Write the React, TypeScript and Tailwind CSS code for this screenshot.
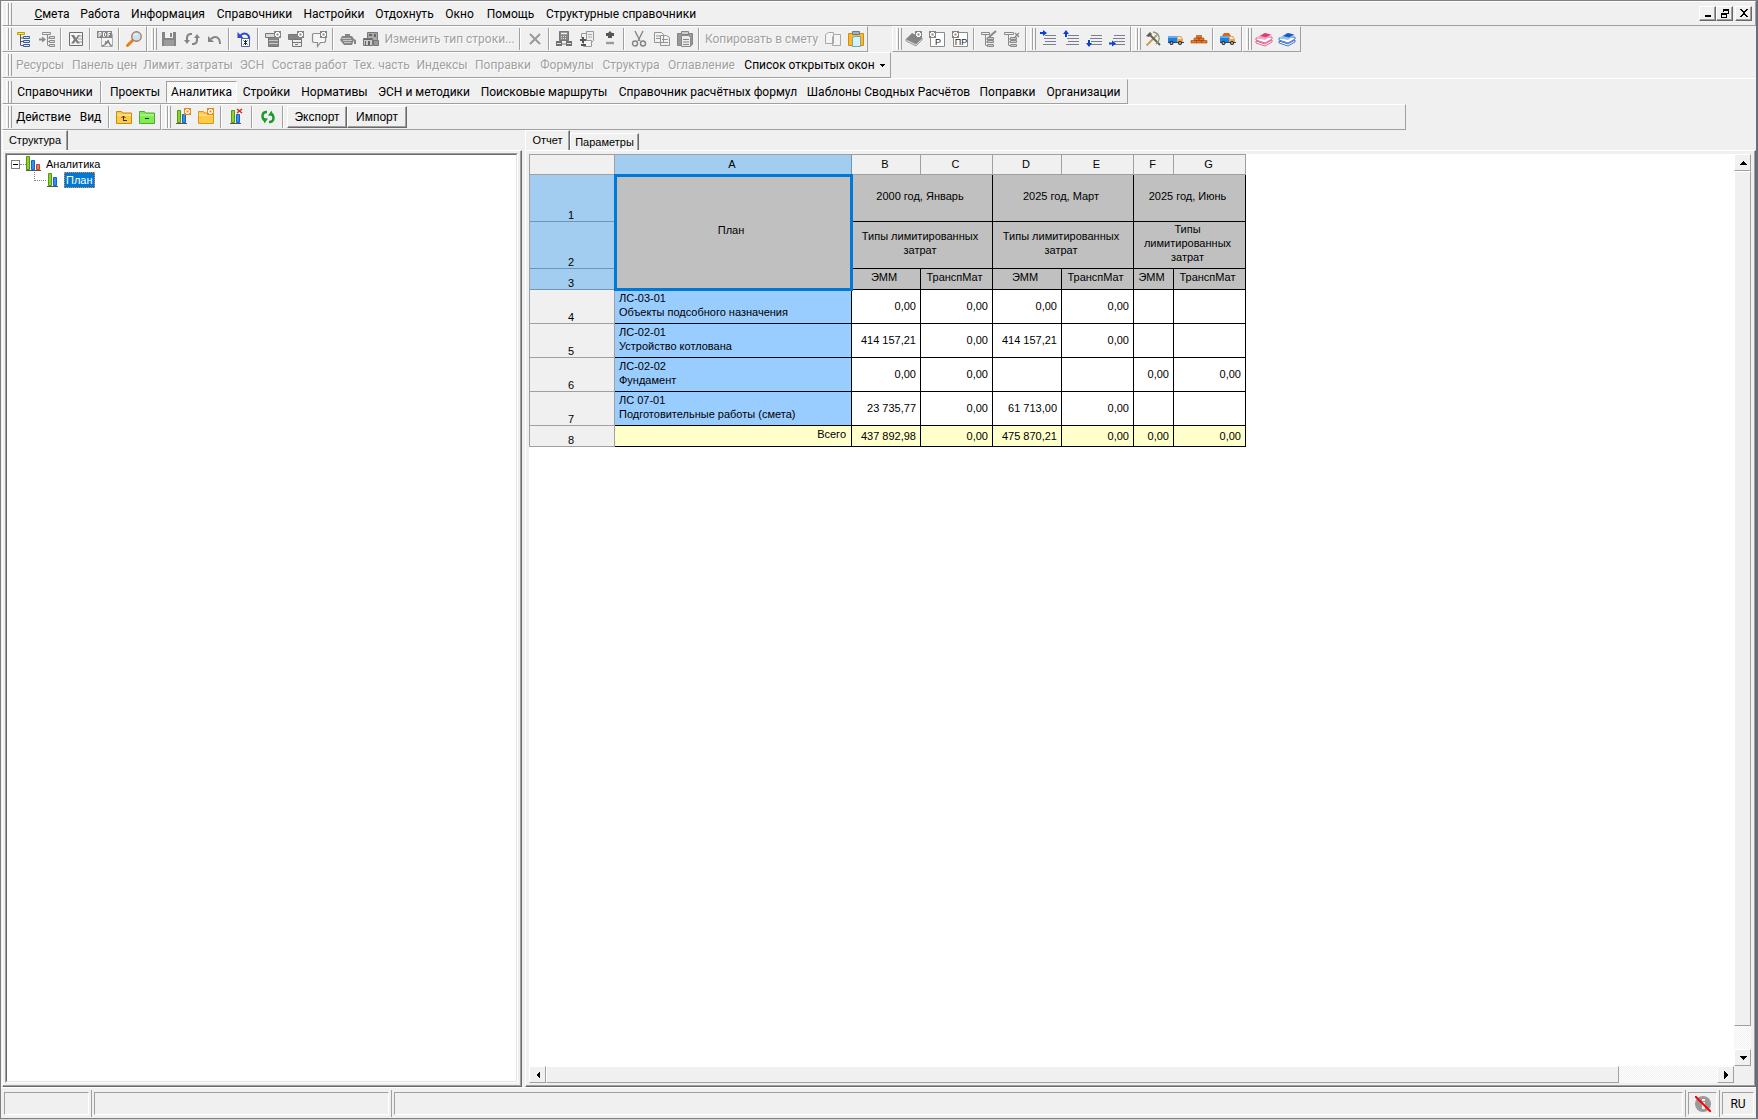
import type { ReactNode } from "react";

const ui = "font-[Roboto,'Open_Sans',sans-serif] text-[12px]";

type Item = { label: string; w: string; disabled?: boolean };

const menu: Item[] = [
  { label: "Смета", w: "w-[46px]" },
  { label: "Работа", w: "w-[50px]" },
  { label: "Информация", w: "w-[86px]" },
  { label: "Справочники", w: "w-[87px]" },
  { label: "Настройки", w: "w-[72px]" },
  { label: "Отдохнуть", w: "w-[69px]" },
  { label: "Окно", w: "w-[41px]" },
  { label: "Помощь", w: "w-[61px]" },
  { label: "Структурные справочники", w: "w-[160px]" },
];

const windows: Item[] = [
  { label: "Ресурсы", w: "w-[56px]" },
  { label: "Панель цен", w: "w-[73px]" },
  { label: "Лимит. затраты", w: "w-[94px]" },
  { label: "ЭСН", w: "w-[34px]" },
  { label: "Состав работ", w: "w-[81px]" },
  { label: "Тех. часть", w: "w-[63px]" },
  { label: "Индексы", w: "w-[58px]" },
  { label: "Поправки", w: "w-[64px]" },
  { label: "Формулы", w: "w-[64px]" },
  { label: "Структура", w: "w-[64px]" },
  { label: "Оглавление", w: "w-[77px]" },
];

const sections: Item[] = [
  { label: "Проекты", w: "w-[62px]" },
  { label: "Аналитика", w: "w-[71px]" },
  { label: "Стройки", w: "w-[59px]" },
  { label: "Нормативы", w: "w-[77px]" },
  { label: "ЭСН и методики", w: "w-[102px]" },
  { label: "Поисковые маршруты", w: "w-[138px]" },
  { label: "Справочник расчётных формул", w: "w-[190px]" },
  { label: "Шаблоны Сводных Расчётов", w: "w-[171px]" },
  { label: "Поправки", w: "w-[67px]" },
  { label: "Организации", w: "w-[85px]" },
];

function Bar({ children, className = "" }: { children: ReactNode; className?: string }) {
  return (
    <div className={`flex h-[26px] items-center border-t border-r border-b border-l border-t-white border-r-[#a0a0a0] border-b-[#a0a0a0] border-l-white pl-[3px] ${className}`}>
      <div className="flex h-[22px] w-[6px] shrink-0">
        <i className="w-[3px] border-r border-l border-r-[#a0a0a0] border-l-white" />
        <i className="w-[3px] border-r border-l border-r-[#a0a0a0] border-l-white" />
      </div>
      {children}
    </div>
  );
}

function Sep({ wide }: { wide?: boolean }) {
  return <i className={`h-[22px] w-[2px] shrink-0 border-r border-l border-r-white border-l-[#a0a0a0] ${wide ? "mx-[3px]" : "mx-[2px]"}`} />;
}

function TextButton({ label, w, disabled, children }: Item & { children?: ReactNode }) {
  return (
    <button type="button" disabled={disabled} className={`flex h-[22px] shrink-0 items-center justify-center whitespace-nowrap ${w} ${disabled ? "text-[#a0a0a0] [text-shadow:1px_1px_0_#fff]" : "text-black"}`}>
      {children ?? label}
    </button>
  );
}

const gear = (x: number, y: number, c: string) => (
  <g>
    <rect x={x} y={y} width="7" height="7" fill={c} />
    <path d={`M${x + 1} ${y + 2}h1v-1h3v1h1v3h-1v1h-3v-1h-1z`} fill="#fff" />
    <rect x={x + 2.5} y={y + 2.5} width="2" height="2" fill={c} />
  </g>
);

const lines = (x: number, w: number) => (
  <path d={`M${x} 4.5h${w}M${x - 1} 7.5h${w + 1}M${x} 10.5h${w}M${x - 2} 13.5h${w + 2}`} stroke="#7b7b95" fill="none" />
);

const truck = (
  <g>
    <path d="M0 5h9v6H0z" fill="#1f7fdc" />
    <path d="M0 5h9v2H0z" fill="#5fb0f2" />
    <path d="M9 5h4l2 3v3H9z" fill="#f0a24a" />
    <path d="M10 6h2l2 2h-4z" fill="#dff0fb" />
    <path d="M0 11h16v1H0z" fill="#174a86" />
    <circle cx="3.5" cy="12" r="2" fill="#222" />
    <circle cx="12" cy="12" r="2" fill="#222" />
    <circle cx="3.5" cy="12" r="1" fill="#bbb" />
    <circle cx="12" cy="12" r="1" fill="#bbb" />
  </g>
);

const books = (dark: string, light: string) => (
  <g>
    <path d="M0 10v2l9 3 7-4V9l-7 4z" fill="#fff" stroke={dark} strokeWidth=".8" />
    <path d="M0 7v2l9 3 7-4V6z" fill="#fff" stroke={dark} strokeWidth=".8" />
    <path d="M0 7l8-5 8 2-7 5z" fill={light} />
    <path d="M4 5l5-3 6 1.500-5 3z" fill={dark} />
  </g>
);

const folder = (a: string, b: string) => (
  <g>
    <path d="M.5 4.500V2.500h5l1 1.500h9v10.500H.5z" fill={a} stroke={b} />
    <path d="M1 6h14" stroke="#fff" opacity=".6" />
  </g>
);

const bars = (
  <g>
    <path d="M2.500 1.500h3v12h-3z" fill="#8fd12a" stroke="#4f9a10" />
    <path d="M7.500 5.500h3v8h-3z" fill="#2a94f4" stroke="#1663c8" />
    <path d="M1 14.500h11" stroke="#555" />
  </g>
);

const icons: Record<string, ReactNode> = {
  tree: (
    <g>
      <path d="M1.500 1.500h7v2h-7z" fill="#ffef3a" stroke="#b5a000" />
      <path d="M4.500 4v10.500M5 7h3M5 10.500h3M5 14.500h3" stroke="#556" fill="none" />
      <path d="M7.500 5.500h6v2h-6zM7.500 9.500h6v2h-6zM7.500 13.500h6v2h-6z" fill="#cfe2ff" stroke="#3d5f96" />
    </g>
  ),
  treeIn: (
    <g stroke="#8c8c8c" fill="none">
      <path d="M3.500 1.500h8v2h-8zM8.500 4v10.500M9 7h2M9 10.500h2M9 14.500h2" />
      <path d="M10.500 5.500h5v2h-5zM10.500 9.500h5v2h-5zM10.500 13.500h5v2h-5z" fill="#ddd" />
      <path d="M0 8.500h4" strokeWidth="2" />
      <path d="M3 5.500v6l4-3z" fill="#8c8c8c" stroke="none" />
    </g>
  ),
  excel: (
    <g>
      <path d="M1.500 1.500h13v13h-13z" fill="#f6f6f6" stroke="#6e6e6e" />
      <path d="M3 4h3l2 3 2-3h2L9 8.500l3 4H9L7.500 10 6 12.500H3l3-4z" fill="#7c7c7c" />
      <path d="M10 5h4M10 8h4M10 11h4" stroke="#999" />
    </g>
  ),
  pdf: (
    <g>
      <path d="M4.500 3.500h11v12h-11z" fill="#f4f4f4" stroke="#b0b0b0" />
      <rect x="0" y="0" width="15" height="7" fill="#858585" />
      <path d="M2 6V1.500h2v2.500H2M6.500 1.500v4h1l1-1v-2l-1-1zM11 6V1.500h2.500M11 3.500h2" stroke="#fff" fill="none" />
      <path d="M5 15c4-1 6-4 6-6 1 3 1 5 4 6M8 14l1-4" stroke="#808080" fill="none" strokeWidth="1.300" />
    </g>
  ),
  find: (
    <g>
      <path d="M1.500 14.500l5-5" stroke="#e87f17" strokeWidth="3" strokeLinecap="round" />
      <circle cx="10.500" cy="5.500" r="4.700" fill="#c4e4f7" stroke="#b4765a" strokeWidth="1.400" />
      <path d="M8 4.500c1-1.500 2-1.800 3.500-1.500" stroke="#fff" fill="none" />
    </g>
  ),
  save: (
    <g>
      <path d="M1 1h14v14H1z" fill="#858585" />
      <path d="M4 1h8v6H4z" fill="#f1f1f1" />
      <path d="M9 2h2v4H9z" fill="#858585" />
      <path d="M3 9h10v6H3z" fill="#9c9c9c" />
    </g>
  ),
  refreshGray: (
    <g stroke="#858585" fill="none" strokeWidth="2">
      <path d="M8 3H6a4 4 0 0 0-3 4v3M8 13h2a4 4 0 0 0 3-4V6" />
      <path d="M0 9h6l-3 4zM10 7h6l-3-4z" fill="#858585" strokeWidth="0" />
    </g>
  ),
  undo: (
    <g>
      <path d="M4 8c4-4 9-2 9 5" stroke="#858585" fill="none" strokeWidth="2" />
      <path d="M1 5v6h6z" fill="#858585" />
    </g>
  ),
  undoBlue: (
    <g>
      <path d="M4 5c4-5 10-2 9 4" stroke="#2947d8" fill="none" strokeWidth="2" />
      <path d="M1.500 1v6h6z" fill="#2947d8" />
      <path d="M5.500 7.500h8v8h-8z" fill="#fff" stroke="#49639a" />
      <path d="M7.500 9.500l4 4M11.500 9.500l-4 4M9.500 9v5" stroke="#222" />
    </g>
  ),
  rowAdd: (
    <g>
      <path d="M.5 2.500h11v4H.5z" fill="#d8d8d8" stroke="#777" />
      <path d="M3.500 6.500h10v9h-10z" fill="#858585" stroke="#777" />
      <path d="M4 9.500h9M4 12.500h9" stroke="#c8c8c8" />
      {gear(9, 0, "#858585")}
    </g>
  ),
  rowAdd2: (
    <g>
      <path d="M.5 3.500h13v5H.5z" fill="#858585" stroke="#777" />
      <path d="M4.500 8.500h9v7h-9z" fill="#eee" stroke="#777" />
      <path d="M5 11.500h8M7 13.500h3" stroke="#777" />
      {gear(9, 0, "#858585")}
    </g>
  ),
  note: (
    <g>
      <path d="M1.500 3.500l1-1h12v8l-1 1h-4l-3 4v-4h-4l-1-1z" fill="#f6f6f6" stroke="#8f8f8f" strokeWidth="1.200" />
      {gear(9, 0, "#858585")}
    </g>
  ),
  mixer: (
    <g fill="#858585">
      <path d="M5 3h5v2H5zM2 5h10l2 3 2 1v4h-2V9l-2 5H4L0 9z" />
      <path d="M2 7.500h9M3 9.500h9M4 11.500h7" stroke="#d8d8d8" strokeWidth=".8" />
    </g>
  ),
  machines: (
    <g>
      <path d="M4.500 1.500h10v8h-10z" fill="#aaa" stroke="#777" />
      <path d="M.5 7.500h9v7h-9z" fill="#ccc" stroke="#777" />
      <path d="M10.500 9.500h5v5h-5z" fill="#999" stroke="#777" />
      <path d="M6 3h3v2H6zM11 3h2v3h-2zM2 10h1v4H2zM5 10h2v4H5zM1 8h8v1H1z" fill="#666" />
    </g>
  ),
  cross: <path d="M3 3l10 10M13 3L3 13" stroke="#999" strokeWidth="2" />,
  calcTree: (
    <g>
      <path d="M3.500.5h9v9h-9z" fill="#858585" stroke="#777" />
      <path d="M5 2.500h6" stroke="#eee" strokeWidth="1.500" />
      <path d="M5 5.500h6M5 7.500h6" stroke="#ddd" strokeDasharray="1 1" />
      <path d="M0 10h6v5H0zM10 10h6v5h-6z" fill="#707070" />
      <path d="M1 12.500h4M11 12.500h4" stroke="#ddd" />
      <path d="M6 13h4" stroke="#777" />
    </g>
  ),
  pages: (
    <g>
      <path d="M7.500.5h7v9l-2 2h-5z" fill="#eee" stroke="#9a9a9a" />
      <path d="M2.500 7V2.500H7" stroke="#9a9a9a" fill="none" />
      <path d="M9 3.500h4M9 6h4" stroke="#aaa" />
      <path d="M4.500 9.500h8v6h-8z" fill="#f4f4f4" stroke="#9a9a9a" />
      <path d="M1 9h6M4 6v6M2 14h5" stroke="#555" strokeWidth="2" />
    </g>
  ),
  plusMinus: (
    <g>
      <path d="M8 0l3 3-1 1v3H6V4L5 3z" fill="#555" />
      <path d="M4 3.500h8" stroke="#555" strokeWidth="3" />
      <path d="M4 12h8" stroke="#999" strokeWidth="2.400" />
    </g>
  ),
  cut: (
    <g stroke="#858585" fill="none" strokeWidth="1.400">
      <path d="M4 0l5 10M12 0L7 10" />
      <circle cx="4" cy="12.500" r="2.500" />
      <circle cx="12" cy="12.500" r="2.500" />
    </g>
  ),
  copy: (
    <g stroke="#949494" fill="#f2f2f2">
      <path d="M.5 1.500h7l2 2v8h-9zM6.500 4.500h6l3 2v8h-9z" />
      <path d="M2 5h4M2 7.500h4M8 8.500h6M8 11.500h6" />
    </g>
  ),
  paste: (
    <g>
      <path d="M.5 2.500h15v11l-1 1H.5z" fill="#999" stroke="#858585" />
      <path d="M4.500.5h7v3h-7z" fill="#ccc" stroke="#858585" />
      <path d="M4.500 4.500h7l2 2v9h-9z" fill="#ececec" stroke="#888" />
      <path d="M6 8.500h6M6 11h6M6 13.500h6" stroke="#888" />
    </g>
  ),
  copyPlain: (
    <g stroke="#a8a8a8" fill="#f4f4f4">
      <path d="M.5 3.500l3-2h5v11h-8zM7.500 5.500l2-2h6v11h-8z" />
    </g>
  ),
  pasteColor: (
    <g>
      <path d="M.5 2.500h15v12H.5z" fill="#fdb62f" stroke="#d98a0a" />
      <path d="M4.500.5h7v3h-7z" fill="#9db4c8" stroke="#647c92" />
      <path d="M4.500 7.500l2-2h6v10h-8z" fill="#d6f3f7" stroke="#6ba9b4" />
    </g>
  ),
  bookGear: (
    <g>
      <path d="M0 8l6-6 10 5-6 7z" fill="#858585" />
      <path d="M0 8v2l10 5 6-6V7l-6 6z" fill="#ddd" stroke="#858585" strokeWidth=".8" />
      {gear(9, 0, "#858585")}
    </g>
  ),
  treeEdit: (
    <g stroke="#8a8a8a" fill="none">
      <path d="M.5 1.500h8v2h-8zM4.500 4v10.500M5 8h2M5 11h2M5 14.500h2" />
      <path d="M6.500 6.500h6v2h-6zM6.500 9.500h6v2h-6zM6.500 13.500h6v2h-6z" fill="#ccc" />
      <path d="M8 6l7-6" strokeWidth="2.200" />
    </g>
  ),
  treeDel: (
    <g stroke="#8a8a8a" fill="none">
      <path d="M.5 1.500h9v2h-9zM4.500 4v10.500M5 8h2M5 11h2M5 14.500h2" />
      <path d="M6.500 6.500h6v2h-6zM6.500 9.500h6v2h-6zM6.500 13.500h6v2h-6z" fill="#ccc" />
      <path d="M11 2l4 4M15 2l-4 4" strokeWidth="1.300" />
    </g>
  ),
  moveRight: <g>{lines(5, 11)}<path d="M0 1h3v-2l4 3-4 3V3H0z" fill="#0a3fd6" /></g>,
  moveUp: <g>{lines(5, 11)}<path d="M2 6V3H0l3-4 3 4H4v3z" fill="#0a3fd6" /></g>,
  moveDown: <g>{lines(5, 11)}<path d="M2 9v3H0l3 4 3-4H4V9z" fill="#0a3fd6" /></g>,
  moveIn: <g>{lines(5, 11)}<path d="M0 11.500h3v-2l4 3-4 3v-2H0z" fill="#0a3fd6" /></g>,
  tools: (
    <g>
      <path d="M1.500 14.500L12 4" stroke="#c99a52" strokeWidth="1.800" />
      <path d="M5 4l10 10" stroke="#5c6653" strokeWidth="1.800" />
      <path d="M1 5l4-4 2 2-3 3z" fill="#59604f" />
      <path d="M8 1c7 1 8 8 3 12" stroke="#8a9a80" fill="none" strokeWidth="1.300" />
    </g>
  ),
  truck,
  bricks: (
    <g fill="#e8772a" stroke="#a34607" strokeWidth=".6">
      <path d="M5.500 4.500h5V7h-5zM3 7h5v2.500H3zM8 7h5v2.500H8zM0 9.500h5.500V12H0zM5.500 9.500h5V12h-5zM10.500 9.500H16V12h-5.500z" />
    </g>
  ),
  truckLoad: <g>{truck}<path d="M2 5l2-3h5l2 3z" fill="#d8651a" /></g>,
  booksRed: books("#d9407c", "#f5a9c3"),
  booksBlue: books("#1f55c4", "#8fc3f2"),
  folderUp: <g>{folder("#fdcb45", "#c18a10")}<path d="M7.500 11.500V7M5.500 9l2-2 2 2M7 11.500h4" stroke="#333" fill="none" /></g>,
  folderMinus: <g>{folder("#7cf04e", "#5aa52c")}<path d="M6 9.500h4" stroke="#222" /></g>,
  chartGear: <g>{bars}{gear(9, -1, "#f2870d")}</g>,
  folderGear: <g>{folder("#fdcb45", "#d59a18")}{gear(9, -1, "#f2870d")}</g>,
  chartDel: <g>{bars}<path d="M8 0l5 4M13 0L8 4" stroke="#e2231a" strokeWidth="1.500" /></g>,
  chart: bars,
  chart3: (
    <g>
      <path d="M.5.5h3v13h-3z" fill="#8fd12a" stroke="#4f9a10" />
      <path d="M5.500 4.500h3v9h-3z" fill="#2a94f4" stroke="#1663c8" />
      <path d="M10.500 8.500h3v5h-3z" fill="#f2735a" stroke="#c9402a" />
      <path d="M0 14.500h15" stroke="#555" />
    </g>
  ),
  refresh: (
    <g stroke="#1d9a2c" fill="none" strokeWidth="2.400">
      <path d="M7 3H6a4 4 0 0 0-3.500 4c0 2 1 4 3 5M9 13h1a4 4 0 0 0 3.500-4c0-2-1-4-3-5" />
      <path d="M3 9l5 .5-3.500 5zM13 7l-5-.5 3.500-5z" fill="#1d9a2c" strokeWidth="0" />
    </g>
  ),
};

function Icon({ name }: { name: string }) {
  return (
    <svg className="h-4 w-4 shrink-0 overflow-visible" viewBox="0 0 16 16" aria-hidden="true">
      {icons[name]}
    </svg>
  );
}

// "Р" and "ПР" buttons: a white page with letters and a small gear
function LetterIcon({ text }: { text: string }) {
  return (
    <svg className="h-4 w-4 shrink-0 overflow-visible" viewBox="0 0 16 16" aria-hidden="true">
      <path d="M1.500 1.500h14v14h-14z" fill="#fff" stroke="#8a8a8a" />
      <text x="9" y="14" fontSize="9" textAnchor="middle" fontFamily="Liberation Sans, sans-serif" fill="#222">{text}</text>
      {gear(0, 0, "#858585")}
    </svg>
  );
}

function Tools({ names }: { names: string[] }) {
  return (
    <>
      {names.map((name) => (
        <button key={name} type="button" aria-label={name} className="flex h-[22px] w-[23px] shrink-0 items-center justify-end pr-[3px]">
          {name === "Р" || name === "ПР" ? <LetterIcon text={name} /> : <Icon name={name} />}
        </button>
      ))}
    </>
  );
}

const raised = "border border-t-white border-l-white border-r-[#696969] border-b-[#696969] bg-[#f0f0f0] shadow-[inset_-1px_-1px_0_#a0a0a0]";

function WindowButton({ label, children }: { label: string; children: ReactNode }) {
  return (
    <button type="button" aria-label={label} className={`flex h-[15px] w-[17px] items-center justify-center ${raised}`}>
      <svg className="h-[9px] w-[10px]" viewBox="0 0 10 9" shapeRendering="crispEdges">{children}</svg>
    </button>
  );
}

function ScrollButton({ label, d }: { label: string; d: string }) {
  return (
    <button type="button" aria-label={label} className="flex h-[17px] w-[17px] shrink-0 items-center justify-center border border-t-white border-l-white border-r-[#a0a0a0] border-b-[#a0a0a0]">
      <svg className="h-[8px] w-[8px]" viewBox="0 0 8 8" shapeRendering="crispEdges"><path d={d} /></svg>
    </button>
  );
}

const track = "bg-[repeating-conic-gradient(#fff_0_25%,#f0f0f0_0_50%)] bg-[length:2px_2px]";

const periods = ["2000 год, Январь", "2025 год, Март", "2025 год, Июнь"];

const rows = [
  { code: "ЛС-03-01", name: "Объекты подсобного назначения", values: ["0,00", "0,00", "0,00", "0,00", "", ""] },
  { code: "ЛС-02-01", name: "Устройство котлована", values: ["414 157,21", "0,00", "414 157,21", "0,00", "", ""] },
  { code: "ЛС-02-02", name: "Фундамент", values: ["0,00", "0,00", "", "", "0,00", "0,00"] },
  { code: "ЛС 07-01", name: "Подготовительные работы (смета)", values: ["23 735,77", "0,00", "61 713,00", "0,00", "", ""] },
];

const totals = ["437 892,98", "0,00", "475 870,21", "0,00", "0,00", "0,00"];

const cell = "border-r border-b border-black p-0";
const rowHead = "border-r border-b border-[#a0a0a0] bg-[#f0f0f0] p-0 pr-[2px] align-bottom leading-3 font-normal";
const rowHeadOn = "border-r border-b border-[#6c96b8] bg-[#a2cdf1] p-0 pr-[2px] align-bottom leading-3 font-normal";
const colHead = "border-r border-b border-[#a0a0a0] bg-[#f0f0f0] p-0 pr-[2px] pb-[2px] font-normal";
const gray = "border-r border-b border-black bg-[#c0c0c0] p-0 pr-[4px] pb-[4px] leading-[14px] font-normal";

function Report() {
  return (
    <table className="w-[717px] table-fixed border-separate border-spacing-0 border-t border-l border-[#a0a0a0] text-center text-[11px] leading-[14px]">
      <colgroup>
        <col className="w-[85px]" />
        <col className="w-[237px]" />
        <col className="w-[69px]" />
        <col className="w-[72px]" />
        <col className="w-[69px]" />
        <col className="w-[72px]" />
        <col className="w-[40px]" />
        <col className="w-[72px]" />
      </colgroup>
      <thead>
        <tr className="h-5">
          <td className="border-r border-b border-[#a0a0a0] bg-[#f0f0f0] p-0" />
          <th className="border-r border-b border-[#6c96b8] bg-[#a2cdf1] p-0 pr-[2px] pb-[2px] font-normal">A</th>
          {["B", "C", "D", "E", "F", "G"].map((c) => (
            <th key={c} className={colHead}>{c}</th>
          ))}
        </tr>
      </thead>
      <tbody>
        <tr className="h-[47px]">
          <th className={rowHeadOn}>1</th>
          <th rowSpan={3} className={`${gray} relative`}>
            План
            <i className="absolute -top-px -right-[2px] -bottom-[2px] -left-px border-[3px] border-[#0078d7]" />
          </th>
          {periods.map((p) => (
            <th key={p} colSpan={2} className={gray}>{p}</th>
          ))}
        </tr>
        <tr className="h-[47px]">
          <th className={rowHeadOn}>2</th>
          {periods.map((p) => (
            <th key={p} colSpan={2} className={gray}>Типы лимитированных затрат</th>
          ))}
        </tr>
        <tr className="h-[21px]">
          <th className={rowHeadOn}>3</th>
          {periods.flatMap((p) => [
            <th key={`${p}-e`} className={gray}>ЭММ</th>,
            <th key={`${p}-t`} className={gray}>ТранспМат</th>,
          ])}
        </tr>
        {rows.map((r, i) => (
          <tr key={r.code} className="h-[34px]">
            <th className={rowHead}>{i + 4}</th>
            <td className={`${cell} bg-[#99ccff] pt-px pl-1 text-left align-top`}>
              {r.code}
              <br />
              {r.name}
            </td>
            {r.values.map((v, j) => (
              <td key={j} className={`${cell} bg-white pr-1 pb-[2px] text-right`}>{v}</td>
            ))}
          </tr>
        ))}
        <tr className="h-[21px]">
          <th className={rowHead}>8</th>
          <td className={`${cell} bg-[#ffffcc] pr-[5px] pb-[4px] text-right`}>Всего</td>
          {totals.map((v, j) => (
            <td key={j} className={`${cell} bg-[#ffffcc] pr-1 text-right`}>{v}</td>
          ))}
        </tr>
      </tbody>
    </table>
  );
}

function Tab({ label, active, className }: { label: string; active?: boolean; className: string }) {
  return (
    <button type="button" role="tab" aria-selected={!!active} className={`flex items-center justify-center border-t border-r border-l border-t-white border-r-[#696969] border-l-white shadow-[inset_-1px_0_0_#a0a0a0] ${className}`}>
      {label}
    </button>
  );
}

const panel = "min-h-0 flex-1 border border-t-white border-r-[#696969] border-b-[#696969] border-l-white shadow-[inset_-1px_-1px_0_#a0a0a0]";
const sunken = "border border-t-[#a0a0a0] border-r-white border-b-white border-l-[#a0a0a0]";

export default function App() {
  return (
    <div className="flex h-screen flex-col overflow-hidden border-t border-r-2 border-b border-l border-t-[#808080] border-r-[#66707c] border-b-[#808080] border-l-[#808080] bg-[#f0f0f0] font-['Liberation_Sans',Arial,sans-serif] text-[11px] text-black">
      <header className={`shrink-0 pl-px ${ui}`}>
        <Bar className="h-[25px]!">
          <nav className="ml-[17px] flex">
            {menu.map((m, i) => (
              <TextButton key={m.label} {...m}>
                {i === 0 ? <span><u>С</u>мета</span> : m.label}
              </TextButton>
            ))}
          </nav>
          <div className="mr-[3px] ml-auto flex">
            <WindowButton label="Свернуть"><path d="M2 6h6v2H2z" /></WindowButton>
            <WindowButton label="Восстановить">
              <path d="M3 0h6v5H7V4h1V2H4v1H3zM1 4h6v5H1zM2 6v2h4V6z" fillRule="evenodd" />
            </WindowButton>
            <span className="w-[2px]" />
            <WindowButton label="Закрыть"><path d="M1 0h2v1h1v1h2V1h1V0h2v1H8v1H7v1H6v2h1v1h1v1h1v1H7V7H6V6H4v1H3v1H1V7h1V6h1V5h1V3H3V2H2V1H1z" /></WindowButton>
          </div>
        </Bar>
        <div className="flex">
          <Bar className="pr-px">
            <Tools names={["tree", "treeIn"]} /><Sep />
            <Tools names={["excel"]} /><Sep />
            <Tools names={["pdf"]} /><Sep />
            <Tools names={["find"]} />
          </Bar>
          <Bar>
            <Tools names={["save", "refreshGray", "undo"]} /><Sep />
            <Tools names={["undoBlue"]} /><Sep />
            <Tools names={["rowAdd", "rowAdd2", "note"]} /><Sep />
            <Tools names={["mixer", "machines"]} />
            <TextButton label="Изменить тип строки..." w="w-[135px]" disabled /><Sep />
            <Tools names={["cross"]} /><Sep />
            <Tools names={["calcTree", "pages", "plusMinus"]} /><Sep />
            <Tools names={["cut", "copy", "paste"]} /><Sep />
            <TextButton label="Копировать в смету" w="w-[119px]" disabled />
            <Tools names={["copyPlain", "pasteColor"]} />
          </Bar>
          <Bar className="ml-6 pr-[2px]">
            <Tools names={["bookGear", "Р", "ПР"]} /><Sep />
            <Tools names={["treeEdit", "treeDel"]} />
          </Bar>
          <Bar className="pr-[2px]">
            <Tools names={["moveRight", "moveUp", "moveDown", "moveIn"]} />
          </Bar>
          <Bar className="pr-[2px]">
            <Tools names={["tools", "truck", "bricks"]} /><Sep />
            <Tools names={["truckLoad"]} />
          </Bar>
          <Bar className="pr-[2px]">
            <Tools names={["booksRed", "booksBlue"]} />
          </Bar>
        </div>
        <div className="flex">
          <Bar className="pr-px">
            {windows.map((w) => <TextButton key={w.label} {...w} disabled />)}
            <TextButton label="Список открытых окон" w="w-[149px]">
              Список открытых окон
              <svg className="ml-[5px] h-[3px] w-[5px]" viewBox="0 0 5 3" shapeRendering="crispEdges"><path d="M0 0h5L2.500 3z" /></svg>
            </TextButton>
          </Bar>
        </div>
        <div className="flex border-t border-white">
          <Bar className="h-[25px]! border-t-[#f0f0f0]! pr-px">
            <TextButton label="Справочники" w="w-[86px]" /><Sep />
            {sections.map((s) =>
              s.label === "Аналитика" ? (
                <button key={s.label} type="button" aria-pressed="true" className={`h-[22px] whitespace-nowrap ${sunken} ${s.w} ${track}`}>
                  {s.label}
                </button>
              ) : (
                <TextButton key={s.label} {...s} />
              ),
            )}
          </Bar>
        </div>
        <div className="flex">
          <Bar className="pr-[2px]">
            <TextButton label="Действие" w="w-[63px]" />
            <TextButton label="Вид" w="w-[31px]" /><Sep />
            <Tools names={["folderUp", "folderMinus"]} />
          </Bar>
          <Bar className="mr-[350px] flex-1">
            <Tools names={["chartGear", "folderGear"]} /><Sep wide />
            <Tools names={["chartDel"]} /><Sep wide />
            <Tools names={["refresh"]} /><Sep wide />
            <button type="button" className={`h-[22px] w-[60px] font-['Liberation_Sans',Arial,sans-serif] ${raised}`}>Экспорт</button>
            <button type="button" className={`h-[22px] w-[60px] font-['Liberation_Sans',Arial,sans-serif] ${raised}`}>Импорт</button>
          </Bar>
        </div>
      </header>

      <main className="flex min-h-0 flex-1 pl-px">
        <section className="flex w-[520px] shrink-0 flex-col">
          <div role="tablist" className="flex h-5">
            <Tab label="Структура" active className="w-[66px]" />
          </div>
          <div className={`flex p-[2px] pr-[3px] pb-[3px] ${panel}`}>
            <div className={`flex-1 ${sunken}`}>
              <ul className="h-full border border-t-[#696969] border-r-[#e3e3e3] border-b-[#e3e3e3] border-l-[#696969] bg-white pt-px pl-1">
                <li>
                  <div className="flex h-4 items-center">
                    <button type="button" aria-label="Свернуть ветвь" className="flex h-[9px] w-[9px] items-center justify-center border border-[#808080]">
                      <i className="h-px w-[5px] bg-black" />
                    </button>
                    <i className="w-[6px] border-t border-dotted border-[#808080]" />
                    <Icon name="chart3" />
                    <span className="ml-1">Аналитика</span>
                  </div>
                  <div className="flex h-4 items-center">
                    <i className="mb-[7px] ml-[23px] h-[9px] w-[12px] border-b border-l border-dotted border-[#808080]" />
                    <Icon name="chart" />
                    <span className="ml-[2px] border border-dotted border-[#ff8728] bg-[#0078d7] px-px leading-[14px] text-white">План</span>
                  </div>
                </li>
              </ul>
            </div>
          </div>
        </section>

        <section className="ml-[3px] flex min-w-0 flex-1 flex-col">
          <div role="tablist" className="flex h-5 items-end">
            <Tab label="Отчет" active className="h-5 w-[45px]" />
            <Tab label="Параметры" className="h-[17px] w-[69px]" />
          </div>
          <div className={`flex flex-col pt-[3px] pr-[4px] pb-[3px] pl-[3px] ${panel}`}>
            <div className="flex min-h-0 flex-1">
              <div className="min-w-0 flex-1 overflow-hidden bg-white">
                <Report />
              </div>
              <div className="flex w-[17px] flex-col">
                <ScrollButton label="Вверх" d="M4 2L0 6h8z" />
                <div className="flex-1 border border-t-white border-r-[#a0a0a0] border-b-[#a0a0a0] border-l-white" />
                <div className={`h-[23px] ${track}`} />
                <ScrollButton label="Вниз" d="M4 6L0 2h8z" />
              </div>
            </div>
            <div className="flex h-[17px] pr-[17px]">
              <ScrollButton label="Влево" d="M2 4L6 0v8z" />
              <div className="flex-1 border border-t-white border-r-[#a0a0a0] border-b-[#a0a0a0] border-l-white" />
              <div className={`w-[98px] ${track}`} />
              <ScrollButton label="Вправо" d="M6 4L2 0v8z" />
            </div>
          </div>
        </section>
      </main>

      <footer className={`flex h-[31px] shrink-0 border-t border-white pt-[2px] pr-[2px] pb-px pl-px ${ui}`}>
        <div className="w-[90px] border-r border-[#a0a0a0] p-[2px]"><div className={`h-full ${sunken}`} /></div>
        <div className="w-[300px] border-r border-[#a0a0a0] p-[2px]"><div className={`h-full ${sunken}`} /></div>
        <div className="flex-1 border-r border-[#a0a0a0] p-[2px]"><div className={`h-full ${sunken}`} /></div>
        <div className="w-[34px] border-r border-[#a0a0a0] p-[2px]">
          <div className={`flex h-full items-center justify-center ${sunken}`}>
            <svg className="h-4 w-4" viewBox="0 0 16 16" aria-hidden="true">
              <circle cx="8" cy="8" r="8" fill="#999" />
              <path d="M7 3h3v2H7zM7 6h3v7H7z" fill="#eee" />
              <path d="M0 0l16 16" stroke="#f00" strokeWidth="2" />
            </svg>
          </div>
        </div>
        <div className="w-[34px] p-[2px] pr-0"><div className={`flex h-full items-center justify-center ${sunken}`}>RU</div></div>
      </footer>
    </div>
  );
}
